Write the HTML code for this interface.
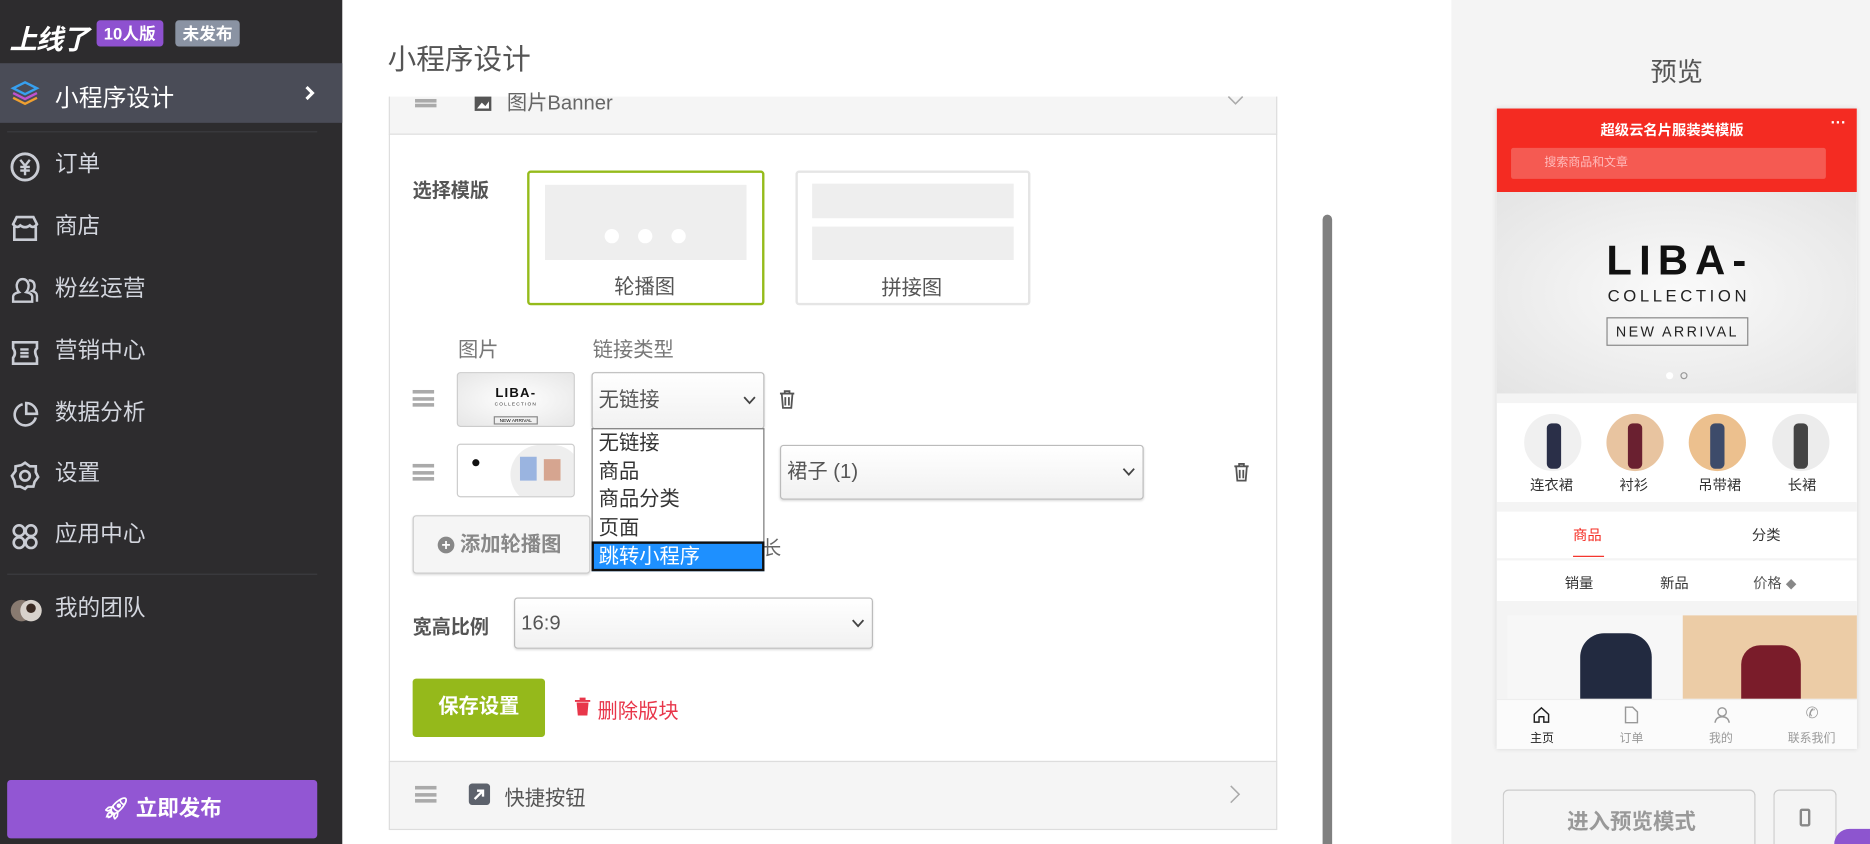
<!DOCTYPE html>
<html><head><meta charset="utf-8"><style>
*{box-sizing:border-box;margin:0;padding:0}
html,body{width:1870px;height:844px;overflow:hidden;background:#fff}
body{font-family:"Liberation Sans","Noto Sans CJK SC",sans-serif}
#w{position:absolute;left:0;top:0;width:1568px;height:708px;transform:scale(1.19260);transform-origin:0 0;overflow:hidden}
.a{position:absolute}
.side{left:0;top:0;width:287px;height:708px;background:#2d2c2e}
.mi{position:absolute;left:0;width:287px;height:40px;color:#d3d6de;font-size:19px;line-height:40px}
.mi span{position:absolute;left:46px}
.mi svg{position:absolute;left:8px;top:8px}
.tag{position:absolute;top:17px;height:22px;border-radius:3px;color:#fff;font-weight:bold;font-size:14px;line-height:22px;padding:0 6px}
.box{border:1px solid #ddd;border-radius:3px}
.sel{position:absolute;border:1px solid #bbb;border-radius:3px;background:linear-gradient(#fff,#f1f1f1);box-shadow:0 1px 2px rgba(0,0,0,.15);font-size:17px;color:#555}
.ham{position:absolute;width:18px;height:14px;border-top:3px solid #aaa;border-bottom:3px solid #aaa}
.ham:after{content:"";position:absolute;left:0;right:0;top:3px;height:3px;background:#aaa}
.t{position:absolute;white-space:nowrap}
</style></head><body><div id="w">

<div class="a side">
 <div class="t" style="left:8px;top:14px;color:#fff;font-size:23px;font-weight:bold;font-style:italic;letter-spacing:-1px">上线了</div>
 <div class="tag" style="left:81px;background:#8e51d0">10人版</div>
 <div class="tag" style="left:147px;background:#8a93a3">未发布</div>
 <div class="a" style="left:0;top:53px;width:287px;height:50px;background:#4a4c57"></div>
 <svg class="a" style="left:8px;top:66px" width="26" height="26" viewBox="0 0 26 26"><path d="M13 3 23 8 13 13 3 8Z" fill="none" stroke="#37a0f0" stroke-width="2"/><path d="M3 12 13 17 23 12" fill="none" stroke="#c052d0" stroke-width="2"/><path d="M3 16 13 21 23 16" fill="none" stroke="#f0a030" stroke-width="2"/></svg>
 <div class="t" style="left:46px;top:66px;color:#fff;font-size:20px">小程序设计</div>
 <svg class="a" style="left:255px;top:71px" width="10" height="14" viewBox="0 0 10 14"><path d="M2 2 7 7 2 12" fill="none" stroke="#fff" stroke-width="2.6"/></svg>
 <div class="a" style="left:6px;top:110px;width:260px;height:1px;background:#3c3c40"></div>
 <div class="mi" style="top:119px"><svg width="26" height="26" viewBox="0 0 26 26"><circle cx="13" cy="13" r="11" fill="none" stroke="#c9ccd4" stroke-width="2.4"/><path d="M9 7 13 12 17 7M13 12V20M9 13H17M9 16H17" stroke="#c9ccd4" stroke-width="2" fill="none"/></svg><span>订单</span></div>
 <div class="mi" style="top:171px"><svg width="26" height="26" viewBox="0 0 26 26"><path d="M3 9 6 3H20L23 9Q20 13 17 10 13 13 9 10 6 13 3 9ZM4 11V22H22V11" fill="none" stroke="#c9ccd4" stroke-width="2.2"/></svg><span>商店</span></div>
 <div class="mi" style="top:223px"><svg width="26" height="26" viewBox="0 0 26 26"><path d="M3 22V18Q3 15 8 14 6 12 6 8 7 3 11 3 15 3 16 8 16 12 14 14 19 15 19 18V22ZM16 4Q21 4 21 9 21 12 19 13 23 14 23 17V22" fill="none" stroke="#c9ccd4" stroke-width="2"/></svg><span>粉丝运营</span></div>
 <div class="mi" style="top:275px"><svg width="26" height="26" viewBox="0 0 26 26"><path d="M3 4H23V9Q20 11 23 17V22H3V17Q6 13 3 9Z" fill="none" stroke="#c9ccd4" stroke-width="2.2"/><path d="M9 10H16M9 13H16M9 16H16" stroke="#c9ccd4" stroke-width="2"/></svg><span>营销中心</span></div>
 <div class="mi" style="top:327px"><svg width="26" height="26" viewBox="0 0 26 26"><path d="M11 4A9 9 0 1 0 22 15" fill="none" stroke="#c9ccd4" stroke-width="2.2"/><path d="M14 3V12H23A9 9 0 0 0 14 3Z" fill="none" stroke="#c9ccd4" stroke-width="2.2"/></svg><span>数据分析</span></div>
 <div class="mi" style="top:378px"><svg width="26" height="26" viewBox="0 0 26 26"><path d="M13 2 17 5 22 5 22 10 24 14 21 18 20 22 15 22 13 24 9 22 5 22 4 17 2 13 5 9 5 5 10 4Z" fill="none" stroke="#c9ccd4" stroke-width="2.2"/><circle cx="13" cy="13" r="4" fill="none" stroke="#c9ccd4" stroke-width="2.2"/></svg><span>设置</span></div>
 <div class="mi" style="top:429px"><svg width="26" height="26" viewBox="0 0 26 26"><g fill="none" stroke="#c9ccd4" stroke-width="2.2"><circle cx="8" cy="8" r="4.5"/><circle cx="18" cy="8" r="4.5"/><circle cx="8" cy="18" r="4.5"/><circle cx="18" cy="18" r="4.5"/></g></svg><span>应用中心</span></div>
 <div class="a" style="left:6px;top:481px;width:260px;height:1px;background:#3c3c40"></div>
 <div class="mi" style="top:491px"><svg width="28" height="26" viewBox="0 0 28 26"><circle cx="10" cy="13" r="9" fill="#887a70"/><circle cx="18" cy="13" r="9" fill="#d8d2cc"/><circle cx="18" cy="11" r="4" fill="#3a2a22"/></svg><span>我的团队</span></div>
 <div class="a" style="left:6px;top:654px;width:260px;height:49px;background:#9256d3;border-radius:3px;color:#fff;font-weight:bold;font-size:18px;text-align:center;line-height:49px">🚀︎ 立即发布</div>
</div>

<div class="t" style="left:325px;top:30px;font-size:24px;color:#555">小程序设计</div>

<div class="a" style="left:326px;top:81px;width:745px;height:32px;background:#f5f5f5;border:1px solid #ddd;border-top:none"></div>
<div class="ham" style="left:348px;top:80px;height:10px;border-top:none"></div>
<svg class="a" style="left:397px;top:80px" width="16" height="14" viewBox="0 0 16 14"><rect x="1" y="1" width="14" height="12" fill="#555"/><path d="M3 11 7 6 10 9 13 5V11Z" fill="#fff"/></svg>
<div class="t" style="left:425px;top:72px;font-size:17px;color:#666">图片Banner</div>
<svg class="a" style="left:1029px;top:80px" width="14" height="9" viewBox="0 0 14 9"><path d="M1 1 7 7 13 1" fill="none" stroke="#aaa" stroke-width="1.3"/></svg>

<div class="a" style="left:326px;top:112px;width:745px;height:527px;border:1px solid #ddd;background:#fff"></div>
<div class="t" style="left:346px;top:146px;font-size:16px;font-weight:bold;color:#555">选择模版</div>
<div class="a" style="left:442px;top:143px;width:199px;height:113px;border:2px solid #95bb1b;border-radius:3px"></div>
<div class="a" style="left:457px;top:155px;width:169px;height:63px;background:#eee"></div>
<div class="a" style="left:507px;top:192px;width:12px;height:12px;border-radius:6px;background:#fff"></div>
<div class="a" style="left:535px;top:192px;width:12px;height:12px;border-radius:6px;background:#fff"></div>
<div class="a" style="left:563px;top:192px;width:12px;height:12px;border-radius:6px;background:#fff"></div>
<div class="t" style="left:515px;top:226px;font-size:17px;color:#555">轮播图</div>
<div class="a box" style="left:667px;top:143px;width:197px;height:113px;border:2px solid #e5e5e5"></div>
<div class="a" style="left:681px;top:154px;width:169px;height:29px;background:#eee"></div>
<div class="a" style="left:681px;top:190px;width:169px;height:28px;background:#eee"></div>
<div class="t" style="left:739px;top:227px;font-size:17px;color:#555">拼接图</div>

<div class="t" style="left:384px;top:279px;font-size:17px;color:#777">图片</div>
<div class="t" style="left:497px;top:279px;font-size:17px;color:#777">链接类型</div>

<div class="ham" style="left:346px;top:327px"></div>
<div class="a" style="left:383px;top:312px;width:99px;height:46px;border:1px solid #ccc;border-radius:3px;background:radial-gradient(#fff,#e6e6e6);text-align:center">
 <div style="font-size:11px;font-weight:900;letter-spacing:1px;margin-top:11px;color:#111">LIBA-</div>
 <div style="font-size:4px;color:#333;letter-spacing:1px">COLLECTION</div>
 <div style="display:inline-block;font-size:4px;border:1px solid #888;padding:0 4px;margin-top:2px">NEW ARRIVAL</div>
</div>
<div class="sel" style="left:496px;top:312px;width:145px;height:48px;line-height:46px;padding-left:5px">无链接<svg style="position:absolute;right:6px;top:19px" width="11" height="8" viewBox="0 0 11 8"><path d="M1 1 5.5 6 10 1" fill="none" stroke="#444" stroke-width="1.5"/></svg></div>
<svg class="a" style="left:653px;top:326px" width="14" height="18" viewBox="0 0 14 18"><path d="M1 4H13M5 4V2H9V4M2.5 4 3.5 16H10.5L11.5 4M5.5 7V14M8.5 7V14" fill="none" stroke="#555" stroke-width="1.5"/></svg>

<div class="ham" style="left:346px;top:389px"></div>
<div class="a" style="left:383px;top:372px;width:99px;height:45px;border:1px solid #ccc;border-radius:3px;background:#fff;overflow:hidden">
 <div class="a" style="left:44px;top:0;width:60px;height:50px;border-radius:30px;background:#eee"></div>
 <div class="a" style="left:12px;top:12px;width:6px;height:6px;border-radius:3px;background:#111"></div>
 <div class="a" style="left:52px;top:10px;width:14px;height:20px;background:#9ab4e0"></div>
 <div class="a" style="left:72px;top:12px;width:14px;height:18px;background:#d6a590"></div>
</div>
<div class="sel" style="left:654px;top:373px;width:305px;height:46px;line-height:44px;padding-left:5px">裙子 (1)<svg style="position:absolute;right:6px;top:18px" width="11" height="8" viewBox="0 0 11 8"><path d="M1 1 5.5 6 10 1" fill="none" stroke="#444" stroke-width="1.5"/></svg></div>
<svg class="a" style="left:1034px;top:387px" width="14" height="18" viewBox="0 0 14 18"><path d="M1 4H13M5 4V2H9V4M2.5 4 3.5 16H10.5L11.5 4M5.5 7V14M8.5 7V14" fill="none" stroke="#555" stroke-width="1.5"/></svg>

<div class="a" style="left:346px;top:432px;width:149px;height:49px;border:1px solid #ccc;border-radius:3px;background:#f5f5f5;box-shadow:0 1px 2px rgba(0,0,0,.15);color:#888;font-weight:bold;font-size:17px;line-height:47px;padding-left:20px"><span style="display:inline-block;width:14px;height:14px;border-radius:7px;background:#888;color:#fff;font-size:13px;line-height:14px;text-align:center;vertical-align:1px">+</span> 添加轮播图</div>
<div class="t" style="left:639px;top:446px;font-size:16px;color:#666">长</div>

<div class="a" style="left:496px;top:359px;width:145px;height:119px;border:1px solid #777;background:#fff;font-size:17px;color:#333;line-height:23.5px;padding-left:5px">无链接<br>商品<br>商品分类<br>页面</div>
<div class="a" style="left:496px;top:454px;width:145px;height:25px;border:2px solid #111;background:#1e90ff;color:#fff;font-size:17px;line-height:21px;padding-left:4px">跳转小程序</div>

<div class="t" style="left:346px;top:512px;font-size:16px;font-weight:bold;color:#555">宽高比例</div>
<div class="sel" style="left:431px;top:501px;width:301px;height:43px;line-height:41px;padding-left:5px">16:9<svg style="position:absolute;right:6px;top:17px" width="11" height="8" viewBox="0 0 11 8"><path d="M1 1 5.5 6 10 1" fill="none" stroke="#444" stroke-width="1.5"/></svg></div>

<div class="a" style="left:346px;top:569px;width:111px;height:49px;background:#95b91b;border-radius:3px;color:#fff;font-weight:bold;font-size:17px;text-align:center;line-height:47px">保存设置</div>
<svg class="a" style="left:482px;top:584px" width="13" height="16" viewBox="0 0 13 16"><path d="M0 3H13V4.5H0ZM4 1H9V3H4ZM1.5 5H11.5L10.5 16H2.5Z" fill="#e8364a"/></svg>
<div class="t" style="left:501px;top:582px;font-size:17px;color:#e8364a">删除版块</div>

<div class="a" style="left:326px;top:638px;width:745px;height:58px;background:#f5f5f5;border:1px solid #ddd"></div>
<div class="ham" style="left:348px;top:659px"></div>
<svg class="a" style="left:393px;top:657px" width="18" height="18" viewBox="0 0 18 18"><rect width="18" height="18" rx="3" fill="#5d626c"/><path d="M5 13 12 6M7 6H12V11" stroke="#fff" stroke-width="2" fill="none"/></svg>
<div class="t" style="left:423px;top:655px;font-size:17px;color:#555">快捷按钮</div>
<svg class="a" style="left:1031px;top:658px" width="9" height="16" viewBox="0 0 9 16"><path d="M1 1 8 8 1 15" fill="none" stroke="#aaa" stroke-width="1.3"/></svg>

<div class="a" style="left:1109px;top:180px;width:8px;height:528px;background:#808080;border-radius:4px 4px 0 0"></div>

<div class="a" style="left:1217px;top:0;width:351px;height:708px;background:#f4f4f4"></div>
<div class="t" style="left:1384px;top:43px;font-size:22px;color:#555">预览</div>
<div class="a" style="left:1255px;top:91px;width:302px;height:537px;background:#fff;box-shadow:0 0 4px rgba(0,0,0,.12);overflow:hidden">
 <div class="a" style="left:0;top:0;width:302px;height:70px;background:#f42b22"></div>
 <div class="t" style="left:87px;top:9px;color:#fff;font-weight:bold;font-size:12px">超级云名片服装类模版</div>
 <div class="t" style="left:280px;top:4px;color:#fff;font-weight:bold;font-size:13px">···</div>
 <div class="a" style="left:12px;top:33px;width:264px;height:26px;background:#f55a52;border-radius:2px;color:#fbb;font-size:10px;line-height:26px;padding-left:28px">搜索商品和文章</div>
 <div class="a" style="left:0;top:70px;width:302px;height:169px;background:radial-gradient(#fafafa,#e4e4e4)"></div>
 <div class="t" style="left:92px;top:108px;font-size:35px;font-weight:900;letter-spacing:6px;color:#111">LIBA-</div>
 <div class="t" style="left:93px;top:149px;font-size:14px;letter-spacing:3px;color:#222">COLLECTION</div>
 <div class="a" style="left:92px;top:175px;width:119px;height:24px;border:1px solid #888;font-size:12px;letter-spacing:2px;color:#222;text-align:center;line-height:22px">NEW ARRIVAL</div>
 <div class="a" style="left:142px;top:221px;width:6px;height:6px;border-radius:3px;background:#fff"></div>
 <div class="a" style="left:154px;top:221px;width:6px;height:6px;border-radius:3px;border:1px solid #999"></div>
 <div class="a" style="left:0;top:239px;width:302px;height:8px;background:#f4f4f4"></div>
 <div class="a" style="left:23px;top:256px;width:48px;height:48px;border-radius:24px;background:#f0f0f0"></div>
 <div class="a" style="left:92px;top:256px;width:48px;height:48px;border-radius:24px;background:#e8c4a0"></div>
 <div class="a" style="left:161px;top:256px;width:48px;height:48px;border-radius:24px;background:#ecc08e"></div>
 <div class="a" style="left:231px;top:256px;width:48px;height:48px;border-radius:24px;background:#ececec"></div>
 <div class="a" style="left:42px;top:264px;width:12px;height:38px;background:#2a2f48;border-radius:4px"></div>
 <div class="a" style="left:110px;top:264px;width:12px;height:38px;background:#6a2030;border-radius:4px"></div>
 <div class="a" style="left:179px;top:264px;width:12px;height:38px;background:#3d4b6a;border-radius:4px"></div>
 <div class="a" style="left:249px;top:264px;width:12px;height:38px;background:#444;border-radius:4px"></div>
 <div class="t" style="left:28px;top:307px;font-size:12px;color:#333">连衣裙</div>
 <div class="t" style="left:103px;top:307px;font-size:12px;color:#333">衬衫</div>
 <div class="t" style="left:169px;top:307px;font-size:12px;color:#333">吊带裙</div>
 <div class="t" style="left:244px;top:307px;font-size:12px;color:#333">长裙</div>
 <div class="a" style="left:0;top:330px;width:302px;height:8px;background:#f4f4f4"></div>
 <div class="t" style="left:64px;top:349px;font-size:12px;color:#f42b22">商品</div>
 <div class="a" style="left:64px;top:375px;width:26px;height:1px;background:#f42b22"></div>
 <div class="t" style="left:214px;top:349px;font-size:12px;color:#333">分类</div>
 <div class="a" style="left:0;top:377px;width:302px;height:2px;background:#f4f4f4"></div>
 <div class="t" style="left:57px;top:389px;font-size:12px;color:#333">销量</div>
 <div class="t" style="left:137px;top:389px;font-size:12px;color:#333">新品</div>
 <div class="t" style="left:215px;top:389px;font-size:12px;color:#555">价格 <span style="font-size:9px;color:#888">◆</span></div>
 <div class="a" style="left:0;top:413px;width:302px;height:124px;background:#f4f4f4"></div>
 <div class="a" style="left:9px;top:425px;width:164px;height:70px;background:#f7f7f7"></div>
 <div class="a" style="left:70px;top:440px;width:60px;height:55px;background:#222a40;border-radius:20px 20px 0 0"></div>
 <div class="a" style="left:156px;top:425px;width:164px;height:70px;background:#eccca6"></div>
 <div class="a" style="left:205px;top:450px;width:50px;height:45px;background:#7a1c2a;border-radius:16px 16px 0 0"></div>
 <div class="a" style="left:0;top:495px;width:302px;height:42px;background:#fbfbfb;border-top:1px solid #eee"></div>
 <svg class="a" style="left:30px;top:501px" width="15" height="15" viewBox="0 0 15 15"><path d="M1.5 7 7.5 1.5 13.5 7V13.5H9.5V9H5.5V13.5H1.5Z" fill="none" stroke="#222" stroke-width="1.2"/></svg>
 <div class="t" style="left:28px;top:519px;font-size:10px;color:#222">主页</div>
 <svg class="a" style="left:107px;top:501px" width="12" height="15" viewBox="0 0 12 15"><path d="M1 1H7L11 5V14H1Z" fill="none" stroke="#999" stroke-width="1.2"/></svg>
 <div class="t" style="left:103px;top:519px;font-size:10px;color:#999">订单</div>
 <svg class="a" style="left:182px;top:501px" width="14" height="15" viewBox="0 0 14 15"><circle cx="7" cy="5" r="3.5" fill="none" stroke="#999" stroke-width="1.2"/><path d="M1 14Q2 9 7 9 12 9 13 14" fill="none" stroke="#999" stroke-width="1.2"/></svg>
 <div class="t" style="left:178px;top:519px;font-size:10px;color:#999">我的</div>
 <div class="t" style="left:259px;top:499px;font-size:13px;color:#999">✆</div>
 <div class="t" style="left:244px;top:519px;font-size:10px;color:#999">联系我们</div>
</div>
<div class="a" style="left:1260px;top:662px;width:212px;height:46px;border:1px solid #ccc;border-bottom:none;border-radius:5px 5px 0 0;background:#f4f4f4;color:#999;font-weight:bold;font-size:18px;padding:12px 0 0 53px">进入预览模式</div>
<div class="a" style="left:1487px;top:662px;width:53px;height:46px;border:1px solid #ccc;border-bottom:none;border-radius:5px 5px 0 0;background:#f4f4f4"></div>
<div class="a" style="left:1509px;top:678px;width:9px;height:15px;border:2px solid #888;border-radius:2px"></div>
<div class="a" style="left:1538px;top:695px;width:30px;height:13px;border-radius:25px 0 0 0;background:#8d55cf"></div>
</div></body></html>
